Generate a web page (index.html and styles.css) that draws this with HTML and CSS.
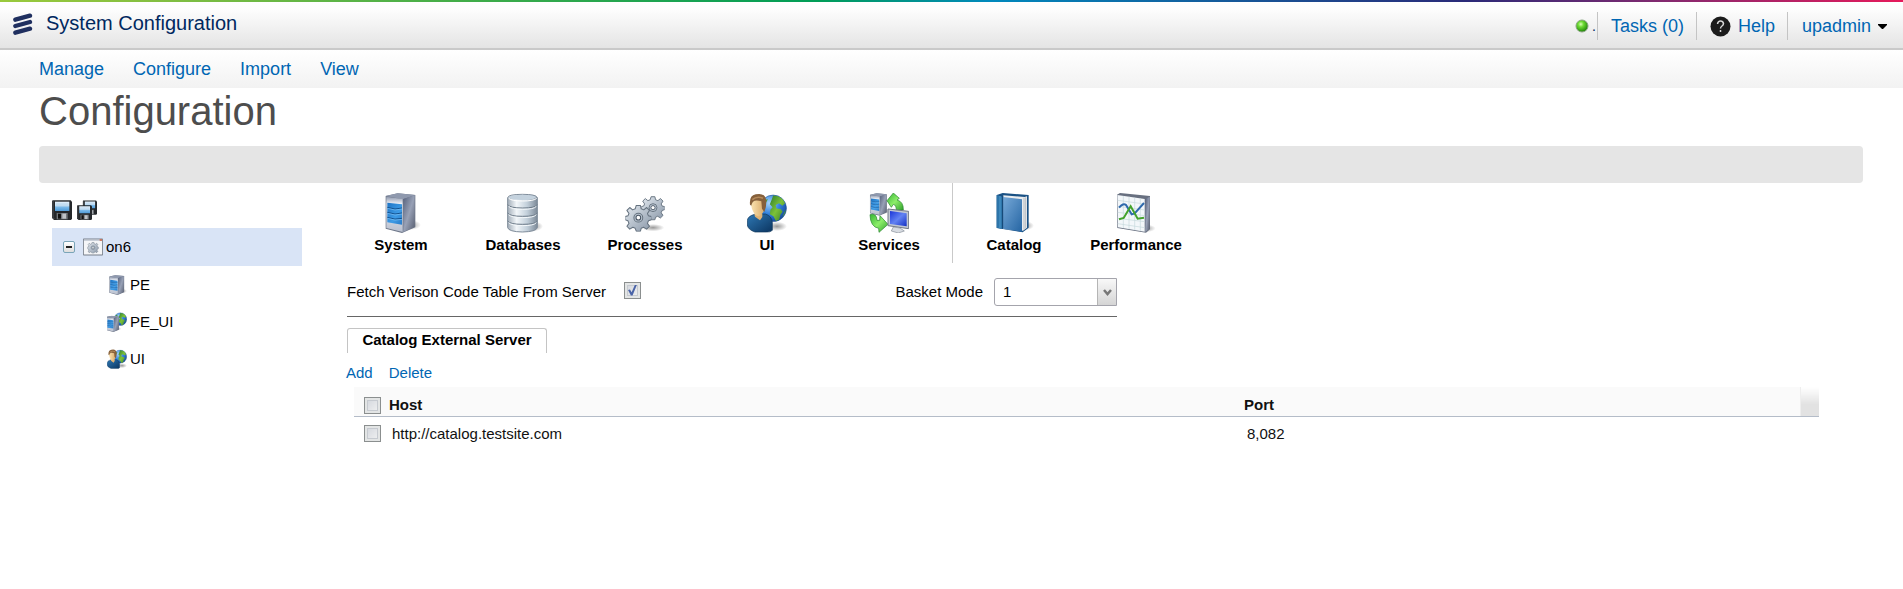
FILE: index.html
```html
<!DOCTYPE html>
<html lang="en">
<head>
<meta charset="utf-8">
<title>System Configuration</title>
<link rel="stylesheet" href="styles.css">
</head>
<body>
<svg class="sprite" aria-hidden="true">
  <defs>
    <linearGradient id="panel" x1="0" y1="0" x2="1" y2="1"><stop offset="0" stop-color="#1f74c4"/><stop offset=".6" stop-color="#3d9be6"/><stop offset="1" stop-color="#2a7cc8"/></linearGradient>
    <linearGradient id="side" x1="0" y1="0" x2="1" y2="1"><stop offset="0" stop-color="#56617c"/><stop offset=".5" stop-color="#98a1b6"/><stop offset="1" stop-color="#565d6f"/></linearGradient>
    <linearGradient id="front" x1="0" y1="0" x2="0" y2="1"><stop offset="0" stop-color="#8f99ae"/><stop offset=".2" stop-color="#eef1f7"/><stop offset="1" stop-color="#b8bfce"/></linearGradient>
    <linearGradient id="disk" x1="0" y1="0" x2="1" y2="0"><stop offset="0" stop-color="#a3aeb9"/><stop offset=".3" stop-color="#f2f6f9"/><stop offset=".65" stop-color="#c3d0db"/><stop offset="1" stop-color="#7d8a98"/></linearGradient>
    <linearGradient id="gear" x1="0" y1="0" x2="1" y2="1"><stop offset="0" stop-color="#e3e9ef"/><stop offset="1" stop-color="#8997a8"/></linearGradient>
    <radialGradient id="sea" cx=".35" cy=".3" r=".8"><stop offset="0" stop-color="#a5d4fb"/><stop offset=".5" stop-color="#3482dc"/><stop offset="1" stop-color="#12418f"/></radialGradient>
    <linearGradient id="land" x1="0" y1="0" x2="1" y2="1"><stop offset="0" stop-color="#2f7d2c"/><stop offset=".5" stop-color="#7cc238"/><stop offset="1" stop-color="#347a28"/></linearGradient>
    <linearGradient id="shirt" x1="0" y1="0" x2="1" y2="1"><stop offset="0" stop-color="#2f78b4"/><stop offset="1" stop-color="#0b3560"/></linearGradient>
    <linearGradient id="face" x1="0" y1="0" x2="1" y2="0"><stop offset="0" stop-color="#fbe3b0"/><stop offset="1" stop-color="#d6a766"/></linearGradient>
    <linearGradient id="cover" x1="0" y1="0" x2="1" y2="1"><stop offset="0" stop-color="#77a9d8"/><stop offset="1" stop-color="#2565a3"/></linearGradient>
    <linearGradient id="lime" x1="0" y1="0" x2="1" y2="1"><stop offset="0" stop-color="#35b534"/><stop offset=".5" stop-color="#8dee6a"/><stop offset="1" stop-color="#2f9f2a"/></linearGradient>
    <linearGradient id="screen" x1="0" y1="0" x2="1" y2="1"><stop offset="0" stop-color="#1a35d8"/><stop offset=".5" stop-color="#6282f2"/><stop offset="1" stop-color="#1530c4"/></linearGradient>
    <linearGradient id="label" x1="0" y1="0" x2="0" y2="1"><stop offset="0" stop-color="#e3f1fc"/><stop offset=".45" stop-color="#c4e0f7"/><stop offset=".55" stop-color="#7dbcec"/><stop offset="1" stop-color="#4f9bd8"/></linearGradient>
    <radialGradient id="led" cx=".4" cy=".35" r=".65"><stop offset="0" stop-color="#dcffb8"/><stop offset=".35" stop-color="#6edb35"/><stop offset="1" stop-color="#1f8508"/></radialGradient>
    <radialGradient id="shadow"><stop offset="0" stop-color="#000" stop-opacity=".4"/><stop offset="1" stop-color="#000" stop-opacity="0"/></radialGradient>
  </defs>
  <symbol id="i-server" viewBox="0 0 120 120">
    <ellipse cx="88" cy="96" rx="32" ry="15" fill="url(#shadow)"/>
    <path d="M14 9 50 1l53 5v97l-40 17-49-13z" fill="#6d7688"/>
    <path d="M14 9 50 1l53 5-38 13z" fill="#8f99ae"/>
    <path d="M16 11l49 7v99l-49-12z" fill="url(#front)"/>
    <path d="M67 18l34-11v94l-34 16z" fill="url(#side)"/>
    <path d="M19 29l44 5v61l-44-7z" fill="url(#panel)"/>
    <path d="M19 43q24 9 44 2M19 58q24 9 44 2M19 73q24 9 44 3" fill="none" stroke="#14528f" stroke-width="3"/>
    <path d="M19 46q24 9 44 2M19 61q24 9 44 2M19 76q24 9 44 3" fill="none" stroke="#7cc0f3" stroke-width="2"/>
  </symbol>
  <symbol id="i-db" viewBox="0 0 120 120">
    <ellipse cx="92" cy="100" rx="28" ry="15" fill="url(#shadow)"/>
    <path d="M14 14Q16 4 58 4t45 10v90q-3 12-45 13-41-1-44-13z" fill="url(#disk)" stroke="#7f8c9a" stroke-width="3"/>
    <ellipse cx="58" cy="13" rx="41" ry="8" fill="#c4d2de"/>
    <path d="M17 16q8 8 42 8t42-8" fill="none" stroke="#fff" stroke-width="3"/>
    <path d="M14 35q6 10 45 10t44-10M14 60q6 10 45 10t44-10M14 84q6 10 45 10t44-10" fill="none" stroke="#6d7b89" stroke-width="3"/>
    <path d="M17 40q8 9 42 9t41-9M17 65q8 9 42 9t41-9M17 89q8 9 42 9t41-9" fill="none" stroke="#f4f8fb" stroke-width="3"/>
  </symbol>
  <symbol id="gear-shape" viewBox="-50 -50 100 100">
    <g fill="url(#gear)" stroke="#65727f" stroke-width="4" stroke-linejoin="round">
      <path d="M-8-47H8l3 13 10 4 11-9 11 11-8 12 4 9 12 3v12l-12 4-4 10 8 11-11 11-12-7-9 4-3 11H-8l-4-11-9-4-12 7-11-11 8-11-4-10-11-4V-4l11-3 4-9-8-12 11-11 11 9 10-4z"/>
      <circle r="17" fill="#b9c4d0"/>
    </g>
    <circle r="9" fill="#fff" stroke="#4c5866" stroke-width="4"/>
  </symbol>
  <symbol id="i-gears" viewBox="0 0 120 120">
    <ellipse cx="84" cy="104" rx="34" ry="11" fill="url(#shadow)"/>
    <use href="#gear-shape" x="49" y="5" width="70" height="78"/>
    <use href="#gear-shape" x="1" y="32" width="78" height="84"/>
  </symbol>
  <symbol id="globe" viewBox="0 0 100 100">
    <circle cx="50" cy="50" r="48" fill="url(#sea)" stroke="#1c4f8e" stroke-width="2"/>
    <path d="M50 4q32 1 43 28l-9 9-13-9-12 6 3 13 15 1 7 10-8 11-4 17-12 6-9-17-13-8 2-16 8-9-10-11 7-17z" fill="url(#land)"/>
    <path d="M9 32l10-13 12-2-7 13-9 10zM90 66l5-12q0 16-12 26z" fill="#4f9d33"/>
  </symbol>
  <symbol id="i-user" viewBox="0 0 120 120">
    <ellipse cx="90" cy="100" rx="30" ry="14" fill="url(#shadow)"/>
    <use href="#globe" x="37" y="3" width="83" height="86"/>
    <path d="M1 82q2-13 22-18l32-1q19 5 21 25v24q-6 6-18 5H24Q3 110 1 96z" fill="url(#shirt)" stroke="#0c3358" stroke-width="2"/>
    <path d="M22 62h24v10l-7 10-15-11z" fill="#e0b273"/>
    <path d="M12 22q6-14 26-14 16 2 16 21 1 29-15 39-7 4-14-3-14-14-13-43z" fill="url(#face)"/>
    <path d="M9 35Q6 8 26 4q30-7 32 22 0 18-6 31l-7-10-2-22q-11-4-20-2-8 3-10 15z" fill="#86603b"/>
    <path d="M16 20q14-12 32-4" fill="none" stroke="#b58b5c" stroke-width="5"/>
  </symbol>
  <symbol id="i-services" viewBox="0 0 120 120">
    <use href="#i-server" x="-9" y="0" width="76" height="68"/>
    <path d="M54 23 73 0l18 16-7 5q20 5 19 30l-21 1q0-16-9-18l-6 9z" fill="url(#lime)" stroke="#23822a" stroke-width="2"/>
    <path d="M3 65q20-6 21 17l8 0 1-14 24 26-27 24-1-12Q4 102 3 65z" fill="url(#lime)" stroke="#23822a" stroke-width="2"/>
    <path d="M57 48l62 7v52l-62-9z" fill="#c2c8d2" stroke="#727986" stroke-width="3"/>
    <path d="M63 54l50 7v39l-50-7z" fill="url(#screen)"/>
    <path d="M73 102l20 3 13 9-18 6-21-6z" fill="#d8dce2" stroke="#858c97" stroke-width="2"/>
  </symbol>
  <symbol id="i-book" viewBox="0 0 120 120">
    <ellipse cx="92" cy="98" rx="28" ry="14" fill="url(#shadow)"/>
    <path d="M8 6 26 0l78 6v98l-18 14-78-13z" fill="#1a5184"/>
    <path d="M28 7l64 5 7-2v94l-12 9-60-6z" fill="#e9ecef"/>
    <path d="M90 14v96M95 13v93" stroke="#a1a7ad" stroke-width="2"/>
    <path d="M8 6l17 5v97l-17-4z" fill="#2d75aa"/>
    <path d="M27 12l57 7v97l-57-9z" fill="url(#cover)"/>
    <path d="M18 9v96" stroke="#4f9acb" stroke-width="3"/>
    <path d="M26 10v97" stroke="#164875" stroke-width="3"/>
  </symbol>
  <symbol id="i-chart" viewBox="0 0 120 120">
    <ellipse cx="88" cy="106" rx="31" ry="12" fill="url(#shadow)"/>
    <path d="M3 5 12 0l90 9v100l-12 10-86-14z" fill="#687080"/>
    <path d="M88 18l13-7v96l-13 10z" fill="url(#side)"/>
    <path d="M4 6l82 12v98L6 103z" fill="#f3f7fa"/>
    <path d="M5 22l81 11M5 40l81 11M5 58l81 10M5 76l81 10M5 92l81 12M22 9v96M39 11v97M56 14v97M73 16v98" stroke="#c5dadc" stroke-width="2"/>
    <path d="M9 44q13-15 21-8l17 28 9-3 28-31" fill="none" stroke="#2f6aad" stroke-width="6"/>
    <path d="M9 79l14-4 21-35 21 37 19-3" fill="none" stroke="#43a32c" stroke-width="6"/>
  </symbol>
  <symbol id="i-save" viewBox="0 0 60 60">
    <path d="M2 1h54l4 4v51l-3 4H6l-6-6V3z" fill="#25282b"/>
    <path d="M3 3v50l4 4" fill="none" stroke="#666b70" stroke-width="2"/>
    <path d="M9 5h43v28H9z" fill="url(#label)"/>
    <path d="M12 12h37M12 18h37" stroke="#b0cfe6" stroke-width="2"/>
    <path d="M14 39h33v19H14z" fill="#74797e"/>
    <path d="M18 41h9v15h-9z" fill="#111"/>
    <path d="M31 41h11v15H31z" fill="#bfc3c7"/>
  </symbol>
  <symbol id="i-saveall" viewBox="0 0 60 60">
    <use href="#i-save" x="17" y="0" width="43" height="45"/>
    <use href="#i-save" x="0" y="15" width="45" height="45"/>
  </symbol>
  <symbol id="i-app" viewBox="0 0 60 50">
    <path d="M1 1h58v48H1z" fill="#f5f6f8" stroke="#777f8a" stroke-width="3"/>
    <path d="M3 3h54v3H3z" fill="#b4bdc9"/><path d="M50 2h7v4h-7z" fill="#d2542f"/>
    <use href="#gear-shape" x="13" y="10" width="34" height="34"/>
  </symbol>
  <symbol id="i-serverglobe" viewBox="0 0 120 120">
    <use href="#globe" x="40" y="0" width="80" height="86"/>
    <use href="#i-server" x="-14" y="22" width="100" height="98"/>
  </symbol>
</svg>

<header class="topbar">
  <svg class="logo" viewBox="0 0 60 66" aria-hidden="true"><path d="M7 20 51 8M7 39 51 27M7 59 51 47" stroke="#1f2f5f" stroke-width="13" stroke-linecap="round"/></svg>
  <span class="app-name">System Configuration</span>
  <div class="session">
    <div class="status"><svg class="led" viewBox="0 0 14 14" aria-hidden="true"><circle cx="7" cy="7" r="6" fill="url(#led)" stroke="#8aa583"/></svg><span class="dot">.</span></div>
    <a class="session-item" href="#">Tasks (0)</a>
    <a class="session-item" href="#"><svg class="help-icon" viewBox="0 0 42 42" aria-hidden="true"><circle cx="21" cy="21" r="20" fill="#1c1c1c"/><path d="M15 16q1-6 6-6t6 5q0 3-3 5t-3 5M21 28v4" fill="none" stroke="#d8d8d8" stroke-width="3"/></svg>Help</a>
    <a class="session-item user" href="#">upadmin<svg class="caret" viewBox="0 0 9 5" aria-hidden="true"><path d="M0 0h9v1L5 5H4L0 1z" fill="#000"/></svg></a>
  </div>
</header>
<nav class="menubar">
  <a href="#">Manage</a><a href="#">Configure</a><a href="#">Import</a><a href="#">View</a>
</nav>

<main class="page">
  <h1>Configuration</h1>
  <div class="band"></div>
  <div class="columns">
    <aside class="sidebar">
      <div class="save-tools">
        <button type="button" aria-label="Save"><svg><use href="#i-save"/></svg></button>
        <button type="button" aria-label="Save all"><svg><use href="#i-saveall"/></svg></button>
      </div>
      <ul class="tree">
        <li>
          <div class="node root"><button type="button" class="toggle" aria-label="Collapse"></button><svg class="node-icon"><use href="#i-app"/></svg><span>on6</span></div>
          <ul class="tree">
            <li class="node"><svg class="node-icon"><use href="#i-server"/></svg><span>PE</span></li>
            <li class="node"><svg class="node-icon"><use href="#i-serverglobe"/></svg><span>PE_UI</span></li>
            <li class="node"><svg class="node-icon"><use href="#i-user"/></svg><span>UI</span></li>
          </ul>
        </li>
      </ul>
    </aside>

    <section class="content">
      <div class="toolbar">
        <button type="button"><svg><use href="#i-server"/></svg>System</button>
        <button type="button"><svg><use href="#i-db"/></svg>Databases</button>
        <button type="button"><svg><use href="#i-gears"/></svg>Processes</button>
        <button type="button"><svg><use href="#i-user"/></svg>UI</button>
        <button type="button"><svg><use href="#i-services"/></svg>Services</button>
        <span class="divider"></span>
        <button type="button"><svg><use href="#i-book"/></svg>Catalog</button>
        <button type="button"><svg><use href="#i-chart"/></svg>Performance</button>
      </div>

      <form class="settings">
        <label for="fetch">Fetch Verison Code Table From Server</label>
        <input class="check" type="checkbox" id="fetch" checked>
        <label class="basket" for="mode">Basket Mode</label>
        <span class="select">
          <select id="mode"><option>1</option></select>
          <span class="select-button"><svg viewBox="0 0 9 7" aria-hidden="true"><path d="M1 1l3.500 4L8 1" fill="none" stroke="#777" stroke-width="2.500"/></svg></span>
        </span>
      </form>

      <div class="tabs"><button type="button" class="tab">Catalog External Server</button></div>
      <div class="actions"><a href="#">Add</a><a href="#">Delete</a></div>

      <table class="servers">
        <thead>
          <tr><th class="pick"><input class="check" type="checkbox" aria-label="Select all"></th><th class="host">Host</th><th>Port</th><th class="end"></th></tr>
        </thead>
        <tbody>
          <tr><td class="pick"><input class="check" type="checkbox" aria-label="Select row"></td><td class="host">http://catalog.testsite.com</td><td>8,082</td><td class="end"></td></tr>
        </tbody>
      </table>
    </section>
  </div>
</main>
</body>
</html>
```
FILE: styles.css
```css
* { box-sizing: border-box; }

body {
  margin: 0;
  background: #fff;
  color: #111;
  font: 15px/20px "Liberation Sans", Arial, sans-serif;
}

a { color: #0066b3; text-decoration: none; }
button { padding: 0; border: 0; background: none; color: inherit; font: inherit; }
svg { display: block; flex: none; }
ul { margin: 0; padding: 0; list-style: none; }
.sprite { position: absolute; width: 0; height: 0; }

.topbar {
  display: flex;
  align-items: center;
  height: 50px;
  padding: 0 16px 0 13px;
  border-bottom: 2px solid #c9c9c9;
  background:
    linear-gradient(90deg, #99c93c 0, #84bf41 8%, #3bab4a 26%, #009d57 43%, #0089bd 52%, #2a2a78 77%, #802a70 87%, #e61a5b 100%) top / 100% 2px no-repeat,
    linear-gradient(#fff 0, #fdfdfd 20%, #e4e4e4 100%);
}
.logo { width: 20px; height: 22px; }
.app-name { flex: 1; padding: 0 0 2px 13px; color: #00285f; font-size: 20px; line-height: 24px; }
.session { display: flex; padding-top: 4px; font-size: 18px; }
.status { display: flex; align-items: center; padding-right: 1px; }
.led { width: 14px; height: 14px; }
.dot { padding-left: 3px; color: #00285f; font-size: 14px; }
.session-item {
  display: flex;
  align-items: center;
  height: 28px;
  padding: 0 12px 0 13px;
  border-left: 1px solid #c4c4c4;
}
.session-item.user { padding: 0 0 0 14px; }
.help-icon { width: 21px; height: 21px; margin-right: 7px; }
.caret { width: 9px; height: 5px; margin-left: 7px; }

.menubar {
  display: flex;
  gap: 29px;
  height: 38px;
  padding: 9px 39px 0;
  background: linear-gradient(#fff, #f2f2f2);
  font-size: 18px;
}

.page { padding: 0 40px 0 39px; }
h1 { margin: 0; padding-bottom: 11px; color: #4d4d4d; font-size: 40px; font-weight: 400; line-height: 47px; }
.band { height: 37px; border-radius: 4px; background: #e5e5e5; }
.columns { display: flex; padding: 0 44px 0 13px; }

.sidebar { width: 250px; flex: none; padding-top: 17px; color: #000; }
.save-tools { display: flex; gap: 5px; padding-bottom: 8px; }
.save-tools svg { width: 20px; height: 20px; }
.node { display: flex; align-items: center; gap: 3px; height: 37px; padding-left: 55px; }
.node-icon { width: 20px; height: 20px; }
.root { height: 38px; padding-left: 11px; background: #d9e4f6; }
.toggle {
  width: 12px;
  height: 12px;
  margin-right: 5px;
  border: 1px solid #7aa5b8;
  border-radius: 2px;
  background: linear-gradient(#222, #222) center / 6px 2px no-repeat, linear-gradient(#fff, #ddd);
}

.content { flex: 1; padding-left: 38px; }
.toolbar { display: flex; height: 80px; color: #000; }
.toolbar button {
  display: flex;
  flex-direction: column;
  align-items: center;
  width: 122px;
  padding-top: 10px;
  font-weight: 700;
}
.toolbar svg { width: 40px; height: 40px; margin-bottom: 2px; }
.divider { width: 1px; margin: 0 0 0 2px; background: #c9c9c9; }

.settings {
  display: flex;
  align-items: center;
  width: 770px;
  height: 54px;
  margin-left: 7px;
  padding-top: 5px;
  border-bottom: 1px solid #666;
  color: #000;
}
.check {
  flex: none;
  width: 17px;
  height: 17px;
  margin: 0;
  appearance: none;
  border: 1px solid #8b8f8f;
  background: linear-gradient(135deg, #cfd3da, #f4f4f4);
  box-shadow: inset 0 0 0 2px #e3e5e5, inset 0 0 0 3px #c6cad0;
}
.settings .check { margin: 0 0 4px 18px; }
.check:checked::before {
  content: "";
  display: block;
  width: 9px;
  height: 11px;
  margin: 2px 0 0 3px;
  background: #4a64a8;
  clip-path: polygon(0 50%, 22% 45%, 40% 70%, 78% 0, 100% 0, 50% 100%, 32% 100%);
}
.basket { margin-left: auto; padding-right: 11px; }
.select { position: relative; width: 123px; }
.select select {
  display: block;
  width: 100%;
  height: 28px;
  padding: 0 28px 0 8px;
  appearance: none;
  border: 1px solid #a4a4ac;
  border-radius: 3px 0 0 3px;
  background: #fff;
  color: #000;
  font: inherit;
}
.select-button {
  position: absolute;
  inset: 1px 1px 1px auto;
  display: grid;
  place-items: center;
  width: 19px;
  border-left: 1px solid #b5b5b5;
  background: linear-gradient(#f8f8f8, #d5d5d5);
  pointer-events: none;
}
.select-button svg { width: 9px; height: 7px; }

.tabs { padding: 11px 0 0 7px; }
.tab {
  width: 200px;
  height: 25px;
  padding-bottom: 2px;
  border: 1px solid #c4c4c4;
  border-bottom: 0;
  border-radius: 3px 3px 0 0;
  color: #000;
  font-weight: 700;
}
.actions { display: flex; gap: 16px; padding: 10px 0 4px 6px; }

.servers { width: calc(100% - 14px); margin-left: 14px; border-collapse: collapse; table-layout: fixed; }
.servers th, .servers td { height: 29px; padding: 0; text-align: left; }
.servers th { padding-top: 8px; border-bottom: 1px solid #b4bcc8; background: #fafafa; }
.servers td { padding: 6px 0 0 3px; }
.servers .pick { width: 35px; padding-left: 10px; }
.servers .host { width: 855px; }
.servers .end { width: 19px; }
.servers th.end { border-left: 1px solid #eee; background: linear-gradient(#fff, #e2e2e2 60%); }
.servers .check { display: block; }
```
